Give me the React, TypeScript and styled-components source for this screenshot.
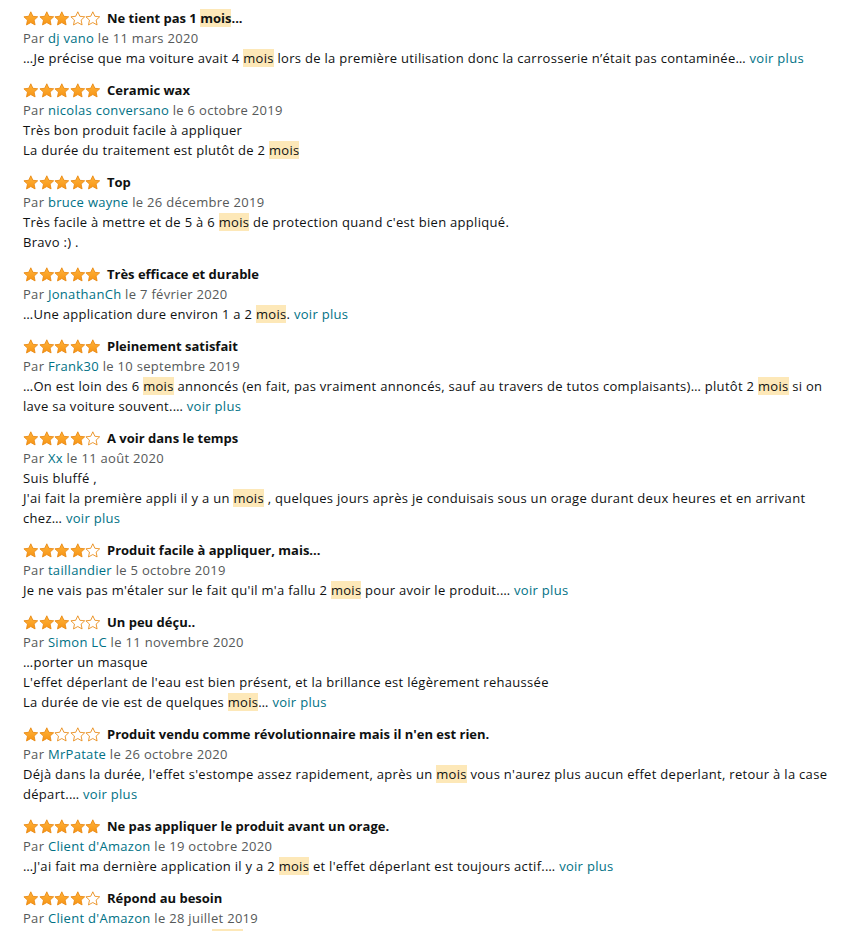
import React from "react"
import styled, { createGlobalStyle } from "styled-components"

const GlobalStyle = createGlobalStyle`
  html, body {
    margin: 0;
    padding: 0;
    background: #fff;
  }
  body {
    font-family: "Open Sans", "Noto Sans", Arial, sans-serif;
    font-size: 13px;
    line-height: 20px;
    letter-spacing: 0.3px;
    color: #0f1111;
  }
`

const List = styled.div`
  width: 808px;
  padding: 8px 0 0 23px;
  display: flex;
  flex-direction: column;
  gap: 12px;
`

const Review = styled.div`
  display: flex;
  flex-direction: column;
`

const TitleRow = styled.div`
  display: flex;
  align-items: center;
  gap: 6px;
  height: 20px;
`

const Stars = styled.span`
  display: inline-flex;
`

const Title = styled.span`
  font-weight: 700;
  letter-spacing: 0;
`

const Byline = styled.div`
  color: #565959;
`

const Link = styled.span`
  color: #007185;
`

const Body = styled.div``

const Mark = styled.span`
  background: #fde8b8;
`

function Star({ filled }: { filled: boolean }) {
  return (
    <svg width="15.6" height="15" viewBox="0 0 24 23">
      <defs>
        <linearGradient id="sg" x1="0" y1="0" x2="0" y2="1">
          <stop offset="0" stopColor="#ffb33b" />
          <stop offset="1" stopColor="#f79414" />
        </linearGradient>
      </defs>
      <path
        d="M12 1.2l3.2 6.9 7.4.8-5.5 5.1 1.5 7.4L12 17.7l-6.6 3.7 1.5-7.4L1.4 8.9l7.4-.8z"
        fill={filled ? "url(#sg)" : "#fff"}
        stroke="#e8870f"
        strokeWidth="1.3"
        strokeLinejoin="round"
      />
    </svg>
  )
}

type Part = string | { m: string }
type Data = {
  stars: number
  title: Part[]
  author: string
  date: string
  lines: Part[][]
  more?: boolean
}

const render = (parts: Part[]) =>
  parts.map((p, i) => (typeof p === "string" ? <React.Fragment key={i}>{p}</React.Fragment> : <Mark key={i}>{p.m}</Mark>))

const M = { m: "mois" }

const reviews: Data[] = [
  {
    stars: 3,
    title: ["Ne tient pas 1 ", M, "..."],
    author: "dj vano",
    date: "11 mars 2020",
    lines: [["…Je précise que ma voiture avait 4 ", M, " lors de la première utilisation donc la carrosserie n’était pas contaminée… "]],
    more: true,
  },
  {
    stars: 5,
    title: ["Ceramic wax"],
    author: "nicolas conversano",
    date: "6 octobre 2019",
    lines: [["Très bon produit facile à appliquer"], ["La durée du traitement est plutôt de 2 ", M]],
  },
  {
    stars: 5,
    title: ["Top"],
    author: "bruce wayne",
    date: "26 décembre 2019",
    lines: [["Très facile à mettre et de 5 à 6 ", M, " de protection quand c'est bien appliqué."], ["Bravo :) ."]],
  },
  {
    stars: 5,
    title: ["Très efficace et durable"],
    author: "JonathanCh",
    date: "7 février 2020",
    lines: [["…Une application dure environ 1 a 2 ", M, ". "]],
    more: true,
  },
  {
    stars: 5,
    title: ["Pleinement satisfait"],
    author: "Frank30",
    date: "10 septembre 2019",
    lines: [
      [
        "…On est loin des 6 ",
        M,
        " annoncés (en fait, pas vraiment annoncés, sauf au travers de tutos complaisants)… plutôt 2 ",
        M,
        " si on lave sa voiture souvent.… ",
      ],
    ],
    more: true,
  },
  {
    stars: 4,
    title: ["A voir dans le temps"],
    author: "Xx",
    date: "11 août 2020",
    lines: [
      ["Suis bluffé ,"],
      ["J'ai fait la première appli il y a un ", M, " , quelques jours après je conduisais sous un orage durant deux heures et en arrivant chez… "],
    ],
    more: true,
  },
  {
    stars: 4,
    title: ["Produit facile à appliquer, mais..."],
    author: "taillandier",
    date: "5 octobre 2019",
    lines: [["Je ne vais pas m'étaler sur le fait qu'il m'a fallu 2 ", M, " pour avoir le produit.… "]],
    more: true,
  },
  {
    stars: 3,
    title: ["Un peu déçu.."],
    author: "Simon LC",
    date: "11 novembre 2020",
    lines: [
      ["…porter un masque"],
      ["L'effet déperlant de l'eau est bien présent, et la brillance est légèrement rehaussée"],
      ["La durée de vie est de quelques ", M, "… "],
    ],
    more: true,
  },
  {
    stars: 2,
    title: ["Produit vendu comme révolutionnaire mais il n'en est rien."],
    author: "MrPatate",
    date: "26 octobre 2020",
    lines: [
      [
        "Déjà dans la durée, l'effet s'estompe assez rapidement, après un ",
        M,
        " vous n'aurez plus aucun effet deperlant, retour à la case départ.… ",
      ],
    ],
    more: true,
  },
  {
    stars: 5,
    title: ["Ne pas appliquer le produit avant un orage."],
    author: "Client d'Amazon",
    date: "19 octobre 2020",
    lines: [["…J'ai fait ma dernière application il y a 2 ", M, " et l'effet déperlant est toujours actif.… "]],
    more: true,
  },
  {
    stars: 4,
    title: ["Répond au besoin"],
    author: "Client d'Amazon",
    date: "28 juillet 2019",
    lines: [["Produit qui tient bien après 2 ", M, " sur la carrosserie."]],
  },
]

export default function App() {
  return (
    <>
      <GlobalStyle />
      <List>
        {reviews.map((r, i) => (
          <Review key={i}>
            <TitleRow>
              <Stars>
                {[0, 1, 2, 3, 4].map((s) => (
                  <Star key={s} filled={s < r.stars} />
                ))}
              </Stars>
              <Title>{render(r.title)}</Title>
            </TitleRow>
            <Byline>
              Par <Link>{r.author}</Link> le {r.date}
            </Byline>
            {r.lines.map((l, j) => (
              <Body key={j}>
                {render(l)}
                {r.more && j === r.lines.length - 1 && <Link>voir plus</Link>}
              </Body>
            ))}
          </Review>
        ))}
      </List>
    </>
  )
}
